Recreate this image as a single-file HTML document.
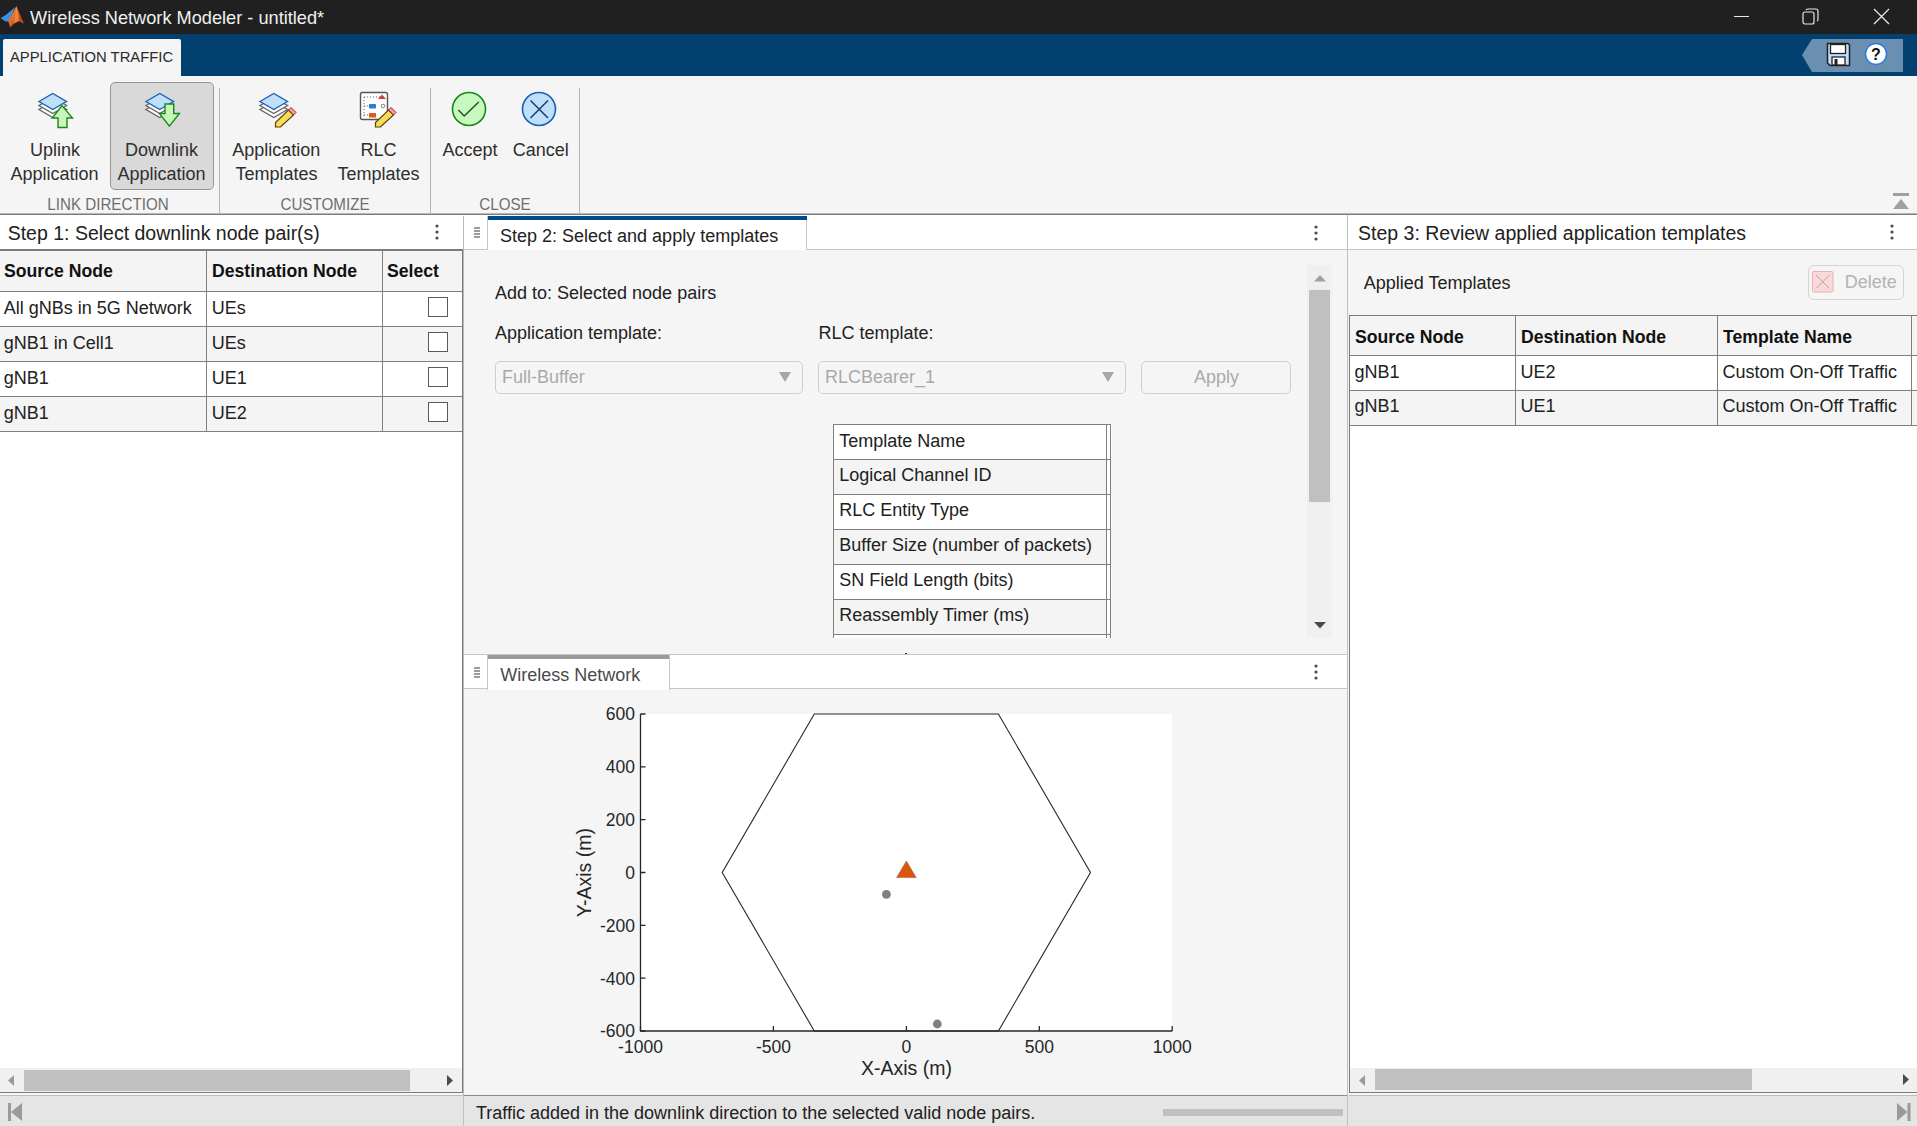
<!DOCTYPE html>
<html><head><meta charset="utf-8">
<style>
*{box-sizing:border-box;margin:0;padding:0}
html,body{width:1917px;height:1126px;overflow:hidden;background:#f5f5f5;font-family:"Liberation Sans",sans-serif;color:#212121}
.a{position:absolute}
.t{position:absolute;white-space:nowrap;line-height:1}
.c{position:absolute;white-space:nowrap;line-height:1;transform:translateX(-50%)}
.tb{font-size:18px;color:#2e2e2e}
.gl{font-size:16.5px;color:#6e6e6e}
.dot{position:absolute;width:3.2px;height:3.2px;border-radius:50%;background:#444;margin:0.4px}
.hl{position:absolute;height:1px}
.vl{position:absolute;width:1px}
</style></head><body>

<!-- TITLE BAR -->
<div class="a" style="left:0;top:0;width:1917px;height:34px;background:#202020"></div>
<svg class="a" style="left:0;top:0" width="30" height="32" viewBox="0 0 30 32">
 <defs><linearGradient id="mg" x1="0" y1="0" x2="1" y2="1"><stop offset="0" stop-color="#f8d040"/><stop offset="0.35" stop-color="#e8782a"/><stop offset="0.7" stop-color="#c8401a"/><stop offset="1" stop-color="#e06020"/></linearGradient></defs>
 <path d="M0.5 18.3 L6 14.8 L14.9 7.2 L11.5 15.5 L9 21.3 L5.5 21.6 Z" fill="#3f8fe0"/>
 <path d="M16.4 6 L23.8 23.6 L19 21.2 Q14.5 22.5 10.1 27.6 L8.3 21.3 L11.5 15.5 Z" fill="url(#mg)"/>
 <path d="M16.4 7 L19 21 L14 23 Z" fill="#f0a040" opacity="0.7"/>
</svg>
<div class="t" style="left:30px;top:8.6px;font-size:18.2px;color:#f0f0f0">Wireless Network Modeler - untitled*</div>
<!-- window controls -->
<div class="a" style="left:1734px;top:16px;width:15px;height:1px;background:#e8e8e8"></div>
<svg class="a" style="left:1800px;top:6px" width="22" height="22" viewBox="0 0 22 22">
 <rect x="3" y="6" width="11" height="12" rx="2" fill="none" stroke="#e8e8e8" stroke-width="1.2"/>
 <path d="M6 4 Q6 3 8 3 L16 3 Q18 3 18 5 L18 13 Q18 15 17 15" fill="none" stroke="#e8e8e8" stroke-width="1.2"/>
</svg>
<svg class="a" style="left:1872px;top:7px" width="19" height="19" viewBox="0 0 19 19">
 <path d="M2 2 L17 17 M17 2 L2 17" stroke="#e8e8e8" stroke-width="1.3"/>
</svg>

<!-- BLUE TAB BAR -->
<div class="a" style="left:0;top:34px;width:1917px;height:42px;background:#02406f"></div>
<div class="a" style="left:3px;top:39px;width:178px;height:38px;background:#f5f5f5;border-radius:2px 2px 0 0"></div>
<div class="t" style="left:10px;top:49.9px;font-size:14.8px;color:#2a2a2a">APPLICATION TRAFFIC</div>
<!-- quick access -->
<svg class="a" style="left:1800px;top:38px" width="106" height="36" viewBox="0 0 106 36">
 <path d="M12 1 L103 1 L103 34 L12 34 L2 17 Z" fill="#6a8fb1"/>
</svg>
<svg class="a" style="left:1826px;top:42px" width="25" height="25" viewBox="0 0 25 25">
 <path d="M1.5 1.5 L22 1.5 L23.5 3 L23.5 23.5 L4 23.5 L1.5 21 Z" fill="#bde0fb" stroke="#202020" stroke-width="1.5"/>
 <rect x="4.5" y="2.5" width="15" height="9" fill="#fff" stroke="#202020" stroke-width="1.3"/>
 <rect x="6" y="15" width="13" height="8" fill="#fff" stroke="#202020" stroke-width="1.3"/>
 <rect x="8.5" y="17" width="3" height="6" fill="#202020"/>
</svg>
<svg class="a" style="left:1864px;top:42px" width="24" height="24" viewBox="0 0 24 24">
 <circle cx="12" cy="12" r="10.5" fill="#fff" stroke="#2b7de0" stroke-width="1.5"/>
 <text x="12" y="18" text-anchor="middle" font-family="Liberation Sans" font-weight="700" font-size="16" fill="#111">?</text>
</svg>

<!-- TOOLSTRIP -->
<div class="a" style="left:0;top:213px;width:1917px;height:1px;background:#b8b8b8"></div>
<div class="a" style="left:0;top:214px;width:1917px;height:1px;background:#7c7c7c"></div>
<!-- collapse icon -->
<div class="a" style="left:1893px;top:193px;width:16px;height:3px;background:#a0a0a0"></div>
<svg class="a" style="left:1892px;top:199px" width="18" height="11" viewBox="0 0 18 11"><path d="M9 0 L17 10 L1 10 Z" fill="#a0a0a0"/></svg>

<!-- separators -->
<div class="a" style="left:219px;top:88px;width:1px;height:125px;background:#b4b4b4"></div>
<div class="a" style="left:430px;top:88px;width:1px;height:125px;background:#b4b4b4"></div>
<div class="a" style="left:579px;top:88px;width:1px;height:125px;background:#b4b4b4"></div>

<!-- downlink pressed bg -->
<div class="a" style="left:110px;top:82px;width:104px;height:108px;background:#d9d9d9;border:1px solid #969696;border-radius:5px"></div>

<!-- icons -->
<svg class="a" style="left:0;top:80px" width="600" height="60" viewBox="0 80 600 60">
 <defs>
  <g id="stack">
   <path d="M0 8 L13.75 0 L27.5 8 L13.75 16 Z" transform="translate(0,8)" fill="#fff" stroke="#666" stroke-width="1.4"/>
   <path d="M0 8 L13.75 0 L27.5 8 L13.75 16 Z" transform="translate(0,4)" fill="#fff" stroke="#666" stroke-width="1.4"/>
   <path d="M0 8 L13.75 0 L27.5 8 L13.75 16 Z" fill="#bfe0fb" stroke="#1f5fb0" stroke-width="1.4"/>
  </g>
 </defs>
 <use href="#stack" x="39" y="93.5"/>
 <path d="M62 105.6 L72.5 118 L67 118 L67 127.5 L58 127.5 L58 118 L52.3 118 Z" fill="#c9f5b9" stroke="#17891a" stroke-width="1.4"/>
 <use href="#stack" x="146" y="93.5"/>
 <path d="M165 104 L173.7 104 L173.7 113.5 L179.4 113.5 L169.4 126.2 L159.4 113.5 L165 113.5 Z" fill="#c9f5b9" stroke="#17891a" stroke-width="1.4"/>
 <use href="#stack" x="260" y="93.5"/>
 <g>
  <path d="M275.5 127 L275.5 122.5 L288.5 110 L293.5 115 L280.5 127 Z" fill="#f6dc5a" stroke="#5a4200" stroke-width="1.2"/>
  <path d="M288.5 110 L291 107.5 L296 112.5 L293.5 115 Z" fill="#f4a0a0" stroke="#a02020" stroke-width="1"/>
 </g>
 <rect x="360.5" y="92.5" width="27" height="27" rx="2" fill="#fff" stroke="#555" stroke-width="1.4"/>
 <path d="M364 97 L382 97 M364 97 L364 117 M364 106 L369 106 M364 115 L369 115" stroke="#666" stroke-width="1" stroke-dasharray="1.2 1.8"/>
 <path d="M378 99 L382 94.5 L386 99 Z" fill="#d23a3a"/>
 <rect x="369" y="104" width="7" height="4.5" rx="1" fill="#2a7ed0"/>
 <circle cx="383" cy="106" r="1.8" fill="none" stroke="#777" stroke-width="0.9"/>
 <rect x="369" y="113" width="7" height="4.5" fill="#e05a20"/>
 <g>
  <path d="M375.5 127 L375.5 122.5 L388.5 110 L393.5 115 L380.5 127 Z" fill="#f6dc5a" stroke="#5a4200" stroke-width="1.2"/>
  <path d="M388.5 110 L391 107.5 L396 112.5 L393.5 115 Z" fill="#f4a0a0" stroke="#a02020" stroke-width="1"/>
 </g>
 <circle cx="469" cy="109" r="16.5" fill="#c9f7c0" stroke="#17891a" stroke-width="1.6"/>
 <path d="M458.4 110 L464.2 116 L478.8 102" fill="none" stroke="#1a5a1a" stroke-width="1.5"/>
 <circle cx="539" cy="109" r="16.5" fill="#bfe0fb" stroke="#1f5fb0" stroke-width="1.6"/>
 <path d="M530.5 100.5 L548 118 M548 100.5 L530.5 118" fill="none" stroke="#1a3a6a" stroke-width="1.5"/>
</svg>

<!-- toolstrip labels -->
<div class="c tb" style="left:55px;top:141.2px">Uplink</div>
<div class="c tb" style="left:54.5px;top:164.8px">Application</div>
<div class="c tb" style="left:161.5px;top:141.2px">Downlink</div>
<div class="c tb" style="left:161.5px;top:164.8px">Application</div>
<div class="c tb" style="left:276.3px;top:141.2px">Application</div>
<div class="c tb" style="left:276.5px;top:164.8px">Templates</div>
<div class="c tb" style="left:378.5px;top:141.2px">RLC</div>
<div class="c tb" style="left:378.5px;top:164.8px">Templates</div>
<div class="c tb" style="left:470px;top:141.2px">Accept</div>
<div class="c tb" style="left:540.7px;top:141.2px">Cancel</div>
<div class="c gl" style="left:108px;top:196px;transform:translateX(-50%) scaleX(0.92)">LINK DIRECTION</div>
<div class="c gl" style="left:325px;top:196px;transform:translateX(-50%) scaleX(0.92)">CUSTOMIZE</div>
<div class="c gl" style="left:505px;top:196px;transform:translateX(-50%) scaleX(0.92)">CLOSE</div>

<!-- ===== PANEL 1 ===== -->
<div class="a" style="left:0;top:215px;width:463px;height:35px;background:#fff"></div>
<div class="t" style="left:7.7px;top:224.2px;font-size:19.5px;color:#212121">Step 1: Select downlink node pair(s)</div>
<svg class="a" style="left:434px;top:223px" width="6" height="18" viewBox="0 0 6 18"><circle cx="3" cy="3" r="1.6" fill="#4c4c4c"/><circle cx="3" cy="9" r="1.6" fill="#4c4c4c"/><circle cx="3" cy="15" r="1.6" fill="#4c4c4c"/></svg>
<div class="a" style="left:463px;top:216px;width:1px;height:880px;background:#b8b8b8"></div>
<!-- table 1 -->
<div class="a" style="left:0;top:250px;width:463px;height:818px;background:#fff"></div>
<div class="a" style="left:0;top:251px;width:462px;height:40px;background:#f4f4f4"></div>
<div class="a" style="left:0;top:326px;width:462px;height:35px;background:#f4f4f4"></div>
<div class="a" style="left:0;top:396px;width:462px;height:35px;background:#f4f4f4"></div>
<div class="a" style="left:0;top:249px;width:463px;height:2px;background:#7c7c7c"></div>
<div class="hl" style="left:0;top:291px;width:462px;height:1px;background:#7f7f7f"></div>
<div class="hl" style="left:0;top:326px;width:462px;height:1px;background:#7f7f7f"></div>
<div class="hl" style="left:0;top:361px;width:462px;height:1px;background:#7f7f7f"></div>
<div class="hl" style="left:0;top:396px;width:462px;height:1px;background:#7f7f7f"></div>
<div class="hl" style="left:0;top:431px;width:462px;height:1px;background:#7f7f7f"></div>
<div class="vl" style="left:206px;top:250px;height:182px;width:1px;background:#7f7f7f"></div>
<div class="vl" style="left:382px;top:250px;height:182px;width:1px;background:#7f7f7f"></div>
<div class="vl" style="left:462px;top:250px;height:843px;width:1px;background:#7a7a7a"></div>
<div class="t" style="left:3.7px;top:262.4px;font-size:18.3px;font-weight:700;transform:scaleX(0.965);transform-origin:0 0;color:#111">Source Node</div>
<div class="t" style="left:211.7px;top:262.4px;font-size:18.3px;font-weight:700;transform:scaleX(0.965);transform-origin:0 0;color:#111">Destination Node</div>
<div class="t" style="left:387.3px;top:262.4px;font-size:18.3px;font-weight:700;transform:scaleX(0.965);transform-origin:0 0;color:#111">Select</div>
<div class="t" style="left:3.7px;top:298.6px;font-size:18px">All gNBs in 5G Network</div>
<div class="t" style="left:211.7px;top:298.6px;font-size:18px">UEs</div>
<div class="t" style="left:3.7px;top:333.6px;font-size:18px">gNB1 in Cell1</div>
<div class="t" style="left:211.7px;top:333.6px;font-size:18px">UEs</div>
<div class="t" style="left:3.7px;top:368.6px;font-size:18px">gNB1</div>
<div class="t" style="left:211.7px;top:368.6px;font-size:18px">UE1</div>
<div class="t" style="left:3.7px;top:403.6px;font-size:18px">gNB1</div>
<div class="t" style="left:211.7px;top:403.6px;font-size:18px">UE2</div>
<div class="a" style="left:428px;top:297px;width:20px;height:20px;background:#fff;border:1px solid #5a5a5a"></div>
<div class="a" style="left:428px;top:332px;width:20px;height:20px;background:#fff;border:1px solid #5a5a5a"></div>
<div class="a" style="left:428px;top:367px;width:20px;height:20px;background:#fff;border:1px solid #5a5a5a"></div>
<div class="a" style="left:428px;top:402px;width:20px;height:20px;background:#fff;border:1px solid #5a5a5a"></div>
<!-- scrollbar 1 -->
<div class="a" style="left:0;top:1068px;width:462px;height:24px;background:#f0f0f0"></div>
<div class="a" style="left:24px;top:1070px;width:386px;height:21px;background:#c0c0c0"></div>
<svg class="a" style="left:7px;top:1074px" width="8" height="13" viewBox="0 0 8 13"><path d="M7 1 L1 6.5 L7 12 Z" fill="#9a9a9a"/></svg>
<svg class="a" style="left:446px;top:1074px" width="8" height="13" viewBox="0 0 8 13"><path d="M1 1 L7 6.5 L1 12 Z" fill="#4a4a4a"/></svg>
<div class="a" style="left:0;top:1092px;width:463px;height:1px;background:#7c7c7c"></div>

<!-- ===== PANEL 2 (Step 2) ===== -->
<div class="a" style="left:464px;top:215px;width:883px;height:35px;background:#fff"></div>
<div class="a" style="left:464px;top:249px;width:883px;height:1px;background:#c6c6c6"></div>
<!-- grip -->
<div class="a" style="left:474px;top:227px;width:6px;height:1.5px;background:#9a9a9a"></div>
<div class="a" style="left:474px;top:230px;width:6px;height:1.5px;background:#9a9a9a"></div>
<div class="a" style="left:474px;top:233px;width:6px;height:1.5px;background:#9a9a9a"></div>
<div class="a" style="left:474px;top:236px;width:6px;height:1.5px;background:#9a9a9a"></div>
<!-- tab -->
<div class="a" style="left:487px;top:216px;width:320px;height:34px;background:#fff;border-left:1px solid #c6c6c6;border-right:1px solid #c6c6c6"></div>
<div class="a" style="left:488px;top:216px;width:319px;height:4px;background:#004a8c"></div>
<div class="t" style="left:500px;top:227px;font-size:18px;color:#212121">Step 2: Select and apply templates</div>
<svg class="a" style="left:1313px;top:224px" width="6" height="18" viewBox="0 0 6 18"><circle cx="3" cy="3" r="1.6" fill="#4c4c4c"/><circle cx="3" cy="9" r="1.6" fill="#4c4c4c"/><circle cx="3" cy="15" r="1.6" fill="#4c4c4c"/></svg>
<!-- body -->
<div class="t" style="left:495px;top:283.8px;font-size:18px">Add to: Selected node pairs</div>
<div class="t" style="left:495px;top:323.9px;font-size:18px">Application template:</div>
<div class="t" style="left:818.5px;top:323.9px;font-size:18px">RLC template:</div>
<div class="a" style="left:495px;top:360.5px;width:308px;height:33.5px;border:1px solid #cfcfcf;border-radius:5px;background:#f5f5f5"></div>
<div class="t" style="left:502px;top:367.5px;font-size:18px;color:#a9a9a9">Full-Buffer</div>
<svg class="a" style="left:779px;top:372px" width="12" height="10" viewBox="0 0 12 10"><path d="M0 0 L12 0 L6 10 Z" fill="#a6a6a6"/></svg>
<div class="a" style="left:817.8px;top:360.5px;width:308px;height:33.5px;border:1px solid #cfcfcf;border-radius:5px;background:#f5f5f5"></div>
<div class="t" style="left:825px;top:367.5px;font-size:18px;color:#a9a9a9">RLCBearer_1</div>
<svg class="a" style="left:1102px;top:372px" width="12" height="10" viewBox="0 0 12 10"><path d="M0 0 L12 0 L6 10 Z" fill="#a6a6a6"/></svg>
<div class="a" style="left:1141px;top:360.5px;width:150px;height:33.5px;border:1px solid #cfcfcf;border-radius:5px;background:#f5f5f5"></div>
<div class="c" style="left:1216.5px;top:367.5px;font-size:18px;color:#a9a9a9">Apply</div>
<!-- template table -->
<div class="a" style="left:833px;top:424px;width:279px;height:214px;background:#fff;overflow:hidden">
 <div class="a" style="left:0;top:35px;width:279px;height:35px;background:#f4f4f4"></div>
 <div class="a" style="left:0;top:105px;width:279px;height:35px;background:#f4f4f4"></div>
 <div class="a" style="left:0;top:175px;width:279px;height:35px;background:#f4f4f4"></div>
 <div class="a" style="left:274px;top:0;width:3px;height:214px;background:#fff"></div>
 <div class="a" style="left:0;top:0;width:278px;height:1px;background:#7f7f7f"></div>
 <div class="a" style="left:0;top:35px;width:278px;height:1px;background:#7f7f7f"></div>
 <div class="a" style="left:0;top:70px;width:278px;height:1px;background:#7f7f7f"></div>
 <div class="a" style="left:0;top:105px;width:278px;height:1px;background:#7f7f7f"></div>
 <div class="a" style="left:0;top:140px;width:278px;height:1px;background:#7f7f7f"></div>
 <div class="a" style="left:0;top:175px;width:278px;height:1px;background:#7f7f7f"></div>
 <div class="a" style="left:0;top:210px;width:278px;height:1px;background:#7f7f7f"></div>
 <div class="a" style="left:0;top:0;width:1px;height:214px;background:#7f7f7f"></div>
 <div class="a" style="left:273px;top:0;width:1px;height:214px;background:#7f7f7f"></div>
 <div class="a" style="left:277px;top:0;width:1px;height:214px;background:#7f7f7f"></div>
 <div class="t" style="left:6.3px;top:7.5px;font-size:18px">Template Name</div>
 <div class="t" style="left:6.3px;top:41.8px;font-size:18px">Logical Channel ID</div>
 <div class="t" style="left:6.3px;top:76.8px;font-size:18px">RLC Entity Type</div>
 <div class="t" style="left:6.3px;top:111.8px;font-size:18px">Buffer Size (number of packets)</div>
 <div class="t" style="left:6.3px;top:146.8px;font-size:18px">SN Field Length (bits)</div>
 <div class="t" style="left:6.3px;top:181.8px;font-size:18px">Reassembly Timer (ms)</div>
</div>
<!-- scrollbar v -->
<div class="a" style="left:1307px;top:265px;width:25px;height:373px;background:#f0f0f0"></div>
<div class="a" style="left:1309px;top:290px;width:21px;height:212px;background:#c0c0c0"></div>
<svg class="a" style="left:1313.5px;top:274.5px" width="12" height="7" viewBox="0 0 12 7"><path d="M0 6.5 L6 0 L12 6.5 Z" fill="#a0a0a0"/></svg>
<svg class="a" style="left:1313.5px;top:621.5px" width="12" height="7" viewBox="0 0 12 7"><path d="M0 0 L12 0 L6 6.5 Z" fill="#4a4a4a"/></svg>
<div class="a" style="left:905px;top:653px;width:2px;height:2px;background:#333"></div>
<div class="a" style="left:464px;top:654px;width:883px;height:1px;background:#c6c6c6"></div>

<!-- ===== PANEL 2b (Wireless Network) ===== -->
<div class="a" style="left:464px;top:655px;width:883px;height:34px;background:#fff"></div>
<div class="a" style="left:464px;top:688px;width:883px;height:1px;background:#c6c6c6"></div>
<div class="a" style="left:474px;top:667px;width:6px;height:1.5px;background:#9a9a9a"></div>
<div class="a" style="left:474px;top:670px;width:6px;height:1.5px;background:#9a9a9a"></div>
<div class="a" style="left:474px;top:673px;width:6px;height:1.5px;background:#9a9a9a"></div>
<div class="a" style="left:474px;top:676px;width:6px;height:1.5px;background:#9a9a9a"></div>
<div class="a" style="left:487px;top:655px;width:183px;height:35px;background:#fff;border-left:1px solid #c6c6c6;border-right:1px solid #c6c6c6"></div>
<div class="a" style="left:488px;top:655px;width:181px;height:4px;background:#9a9a9a"></div>
<div class="t" style="left:500.3px;top:665.5px;font-size:18px;color:#4a4a4a">Wireless Network</div>
<svg class="a" style="left:1313px;top:663px" width="6" height="18" viewBox="0 0 6 18"><circle cx="3" cy="3" r="1.6" fill="#4c4c4c"/><circle cx="3" cy="9" r="1.6" fill="#4c4c4c"/><circle cx="3" cy="15" r="1.6" fill="#4c4c4c"/></svg>

<!-- ===== PANEL 3 ===== -->
<div class="a" style="left:1347px;top:215px;width:1px;height:911px;background:#c0c0c0"></div>
<div class="a" style="left:1348px;top:215px;width:569px;height:34px;background:#fff"></div>
<div class="a" style="left:1348px;top:249px;width:569px;height:1px;background:#c6c6c6"></div>
<div class="t" style="left:1358px;top:224.2px;font-size:19.5px;color:#212121">Step 3: Review applied application templates</div>
<svg class="a" style="left:1889px;top:223px" width="6" height="18" viewBox="0 0 6 18"><circle cx="3" cy="3" r="1.6" fill="#4c4c4c"/><circle cx="3" cy="9" r="1.6" fill="#4c4c4c"/><circle cx="3" cy="15" r="1.6" fill="#4c4c4c"/></svg>
<div class="t" style="left:1363.7px;top:274.2px;font-size:18px">Applied Templates</div>
<div class="a" style="left:1808px;top:265px;width:96px;height:35px;border:1px solid #d4d4d4;border-radius:6px;background:#f5f5f5"></div>
<svg class="a" style="left:1812px;top:271px" width="22" height="22" viewBox="0 0 22 22">
 <rect x="0.5" y="0.5" width="20.5" height="20.5" rx="1.5" fill="#f9d9d9" stroke="#e5b0b0"/>
 <path d="M4 4 L17.5 17.5 M17.5 4 L4 17.5" stroke="#c0a0a0" stroke-width="1"/>
</svg>
<div class="t" style="left:1844.7px;top:273.4px;font-size:18px;color:#b3b3b3">Delete</div>
<!-- table 3 -->
<div class="a" style="left:1349px;top:315px;width:568px;height:777px;background:#fff"></div>
<div class="a" style="left:1349px;top:316px;width:568px;height:39px;background:#f4f4f4"></div>
<div class="a" style="left:1349px;top:390px;width:568px;height:35px;background:#f4f4f4"></div>
<div class="a" style="left:1349px;top:315px;width:568px;height:1px;background:#7a7a7a"></div>
<div class="hl" style="left:1349px;top:355px;width:568px;height:1px;background:#7f7f7f"></div>
<div class="hl" style="left:1349px;top:390px;width:568px;height:1px;background:#7f7f7f"></div>
<div class="hl" style="left:1349px;top:425px;width:568px;height:1px;background:#7f7f7f"></div>
<div class="vl" style="left:1349px;top:315px;height:778px;width:1px;background:#7a7a7a"></div>
<div class="vl" style="left:1515px;top:315px;height:110px;width:1px;background:#7f7f7f"></div>
<div class="vl" style="left:1717px;top:315px;height:110px;width:1px;background:#7f7f7f"></div>
<div class="vl" style="left:1911px;top:315px;height:110px;width:1px;background:#7f7f7f"></div>
<div class="t" style="left:1354.5px;top:328.2px;font-size:18.3px;font-weight:700;transform:scaleX(0.965);transform-origin:0 0;color:#111">Source Node</div>
<div class="t" style="left:1520.5px;top:328.2px;font-size:18.3px;font-weight:700;transform:scaleX(0.965);transform-origin:0 0;color:#111">Destination Node</div>
<div class="t" style="left:1722.6px;top:328.2px;font-size:18.3px;font-weight:700;transform:scaleX(0.965);transform-origin:0 0;color:#111">Template Name</div>
<div class="t" style="left:1354.5px;top:363px;font-size:18px">gNB1</div>
<div class="t" style="left:1520.5px;top:363px;font-size:18px">UE2</div>
<div class="t" style="left:1722.6px;top:363px;font-size:18px">Custom On-Off Traffic</div>
<div class="t" style="left:1354.5px;top:397.4px;font-size:18px">gNB1</div>
<div class="t" style="left:1520.5px;top:397.4px;font-size:18px">UE1</div>
<div class="t" style="left:1722.6px;top:397.4px;font-size:18px">Custom On-Off Traffic</div>
<!-- scrollbar 3 -->
<div class="a" style="left:1350px;top:1068px;width:567px;height:24px;background:#f0f0f0"></div>
<div class="a" style="left:1375px;top:1069px;width:377px;height:21px;background:#c0c0c0"></div>
<svg class="a" style="left:1358px;top:1074px" width="8" height="13" viewBox="0 0 8 13"><path d="M7 1 L1 6.5 L7 12 Z" fill="#9a9a9a"/></svg>
<svg class="a" style="left:1902px;top:1073px" width="8" height="13" viewBox="0 0 8 13"><path d="M1 1 L7 6.5 L1 12 Z" fill="#4a4a4a"/></svg>
<div class="a" style="left:1349px;top:1092px;width:568px;height:1px;background:#7c7c7c"></div>

<!-- ===== STATUS BAR ===== -->
<div class="a" style="left:0;top:1095px;width:1917px;height:31px;background:#e5e5e5"></div>
<div class="a" style="left:0;top:1095px;width:463px;height:1px;background:#bdbdbd"></div>
<div class="a" style="left:464px;top:1095px;width:883px;height:1px;background:#8a8a8a"></div>
<div class="a" style="left:1349px;top:1095px;width:568px;height:1px;background:#bdbdbd"></div>
<div class="a" style="left:463px;top:1095px;width:1px;height:31px;background:#c0c0c0"></div>
<div class="a" style="left:1347px;top:1095px;width:1px;height:31px;background:#c0c0c0"></div>
<svg class="a" style="left:7px;top:1102px" width="16" height="20" viewBox="0 0 16 20"><rect x="1" y="1" width="3" height="18" fill="#999"/><path d="M15 1 L4 10 L15 19 Z" fill="#999"/></svg>
<svg class="a" style="left:1895px;top:1102px" width="17" height="20" viewBox="0 0 17 20"><rect x="12.5" y="1" width="3" height="18" fill="#999"/><path d="M2 1 L12.5 10 L2 19 Z" fill="#999"/></svg>
<div class="t" style="left:476px;top:1103.9px;font-size:18px;color:#212121">Traffic added in the downlink direction to the selected valid node pairs.</div>
<div class="a" style="left:1163px;top:1109px;width:180px;height:7px;background:#c0c0c0"></div>

<!-- ===== PLOT ===== -->
<svg class="a" style="left:464px;top:689px" width="883" height="406" viewBox="464 689 883 406">
<rect x="640.5" y="714.0" width="531.7" height="317.0" fill="#fff"/>
<polygon points="1090.5,872.5 998.4,714.0 814.3,714.0 722.2,872.5 814.3,1031.0 998.4,1031.0" fill="none" stroke="#262626" stroke-width="1.1"/>
<path d="M640.5 714.0 L640.5 1031 L1172.2 1031" fill="none" stroke="#262626" stroke-width="1.3"/>
<path d="M640.5 1031 L640.5 1026 M773.4 1031 L773.4 1026 M906.4 1031 L906.4 1026 M1039.3 1031 L1039.3 1026 M1172.2 1031 L1172.2 1026 M640.5 1031.0 L645.5 1031.0 M640.5 978.2 L645.5 978.2 M640.5 925.3 L645.5 925.3 M640.5 872.5 L645.5 872.5 M640.5 819.7 L645.5 819.7 M640.5 766.8 L645.5 766.8 M640.5 714.0 L645.5 714.0" stroke="#262626" stroke-width="1.3"/>
<text x="640.5" y="1053.3" text-anchor="middle" font-family="Liberation Sans" font-size="17.5" fill="#262626">-1000</text>
<text x="773.4" y="1053.3" text-anchor="middle" font-family="Liberation Sans" font-size="17.5" fill="#262626">-500</text>
<text x="906.4" y="1053.3" text-anchor="middle" font-family="Liberation Sans" font-size="17.5" fill="#262626">0</text>
<text x="1039.3" y="1053.3" text-anchor="middle" font-family="Liberation Sans" font-size="17.5" fill="#262626">500</text>
<text x="1172.2" y="1053.3" text-anchor="middle" font-family="Liberation Sans" font-size="17.5" fill="#262626">1000</text>
<text x="635" y="1037.3" text-anchor="end" font-family="Liberation Sans" font-size="17.5" fill="#262626">-600</text>
<text x="635" y="984.5" text-anchor="end" font-family="Liberation Sans" font-size="17.5" fill="#262626">-400</text>
<text x="635" y="931.6" text-anchor="end" font-family="Liberation Sans" font-size="17.5" fill="#262626">-200</text>
<text x="635" y="878.8" text-anchor="end" font-family="Liberation Sans" font-size="17.5" fill="#262626">0</text>
<text x="635" y="826.0" text-anchor="end" font-family="Liberation Sans" font-size="17.5" fill="#262626">200</text>
<text x="635" y="773.1" text-anchor="end" font-family="Liberation Sans" font-size="17.5" fill="#262626">400</text>
<text x="635" y="720.3" text-anchor="end" font-family="Liberation Sans" font-size="17.5" fill="#262626">600</text>
<text x="906.4" y="1075.4" text-anchor="middle" font-family="Liberation Sans" font-size="19.5" fill="#262626">X-Axis (m)</text>
<text x="0" y="0" transform="translate(591,872.7) rotate(-90)" text-anchor="middle" font-family="Liberation Sans" font-size="19.5" fill="#262626">Y-Axis (m)</text>
<polygon points="906.4,861 896.6,877.6 916.2,877.6" fill="#dd5508" stroke="#8a6a5a" stroke-width="0.6"/>
<circle cx="886.4" cy="894.3" r="4.4" fill="#808080"/>
<circle cx="937.3" cy="1024" r="4.4" fill="#808080"/>
</svg>
<!--PANELS-->

</body></html>
